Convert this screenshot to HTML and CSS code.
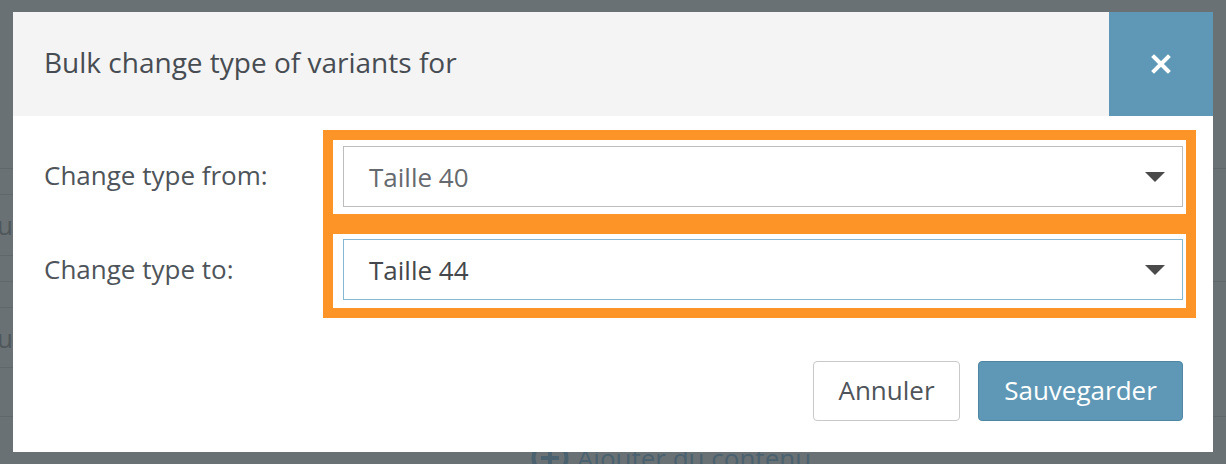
FILE: index.html
```html
<!DOCTYPE html>
<html lang="fr">
<head>
<meta charset="utf-8">
<title>Bulk change type of variants</title>
<link rel="stylesheet" href="styles.css">
</head>
<body>
  <div class="page">
    <div class="bg-top"></div>
    <div class="bg-row full h26"></div>
    <div class="bg-row part h61"><div class="bg-cell"><span>Menu</span></div></div>
    <div class="bg-row part h26"></div>
    <div class="bg-row full h26"></div>
    <div class="bg-row part h60"><div class="bg-cell"><span>Menu</span></div></div>
    <div class="bg-row part h49"></div>
    <div class="bg-row full add-row">
      <div class="add">
        <svg class="add-icon" width="38" height="38" viewBox="0 0 38 38" aria-hidden="true">
          <circle cx="19" cy="19" r="16.5" fill="none" stroke="#4a6170" stroke-width="4"/>
          <path d="M19 10v18M10 19h18" stroke="#4a6170" stroke-width="4"/>
        </svg>
        <span>Ajouter du contenu</span>
      </div>
    </div>
  </div>

  <div class="modal" role="dialog">
    <div class="modal-header">
      <h1 class="modal-title">Bulk change type of variants for</h1>
      <button class="close" aria-label="Fermer">
        <svg width="20" height="20" viewBox="0 0 20 20" aria-hidden="true">
          <path d="M3 3L17 17M17 3L3 17" stroke="#fff" stroke-width="4" stroke-linecap="square"/>
        </svg>
      </button>
    </div>
    <div class="modal-body">
      <div class="form-row">
        <label class="label">Change type from:</label>
        <div class="highlight">
          <div class="select">
            <span class="value muted">Taille 40</span>
            <svg class="caret" width="20" height="10" viewBox="0 0 20 10" aria-hidden="true"><path d="M0 0H20L10 10Z" fill="#4a4a4a"/></svg>
          </div>
        </div>
      </div>
      <div class="form-row">
        <label class="label">Change type to:</label>
        <div class="highlight second">
          <div class="select focus">
            <span class="value">Taille 44</span>
            <svg class="caret" width="20" height="10" viewBox="0 0 20 10" aria-hidden="true"><path d="M0 0H20L10 10Z" fill="#4a4a4a"/></svg>
          </div>
        </div>
      </div>
    </div>
    <div class="modal-footer">
      <button class="btn btn-default">Annuler</button>
      <button class="btn btn-primary">Sauvegarder</button>
    </div>
  </div>
</body>
</html>
```
FILE: styles.css
```css
* { box-sizing: border-box; }
html, body { margin: 0; height: 100%; }
body {
  background: #697174;
  font-family: "Open Sans", "Noto Sans", sans-serif;
  overflow: hidden;
}

/* background page (behind backdrop) */
.page { width: 1226px; }
.bg-top { height: 168px; }
.bg-row { border-top: 1px solid #5f676a; position: relative; }
.bg-row.part { border-top: none; }
.bg-row.part::before {
  content: ""; display: block; height: 1px; width: 700px; background: #5f676a;
}
.h26 { height: 26px; }
.h61 { height: 61px; }
.h60 { height: 60px; }
.h49 { height: 49px; }
.bg-cell {
  width: 13px; height: 59px; display: flex; justify-content: flex-end; align-items: center;
  overflow: hidden; white-space: nowrap; color: #4f575b; font-size: 26px;
}
.add-row { padding-top: 22px; }
.add {
  display: flex; align-items: center; justify-content: center; gap: 8px;
  color: #4a6170; font-size: 26px; line-height: 36px; padding-left: 116px;
}
.add-icon { flex: none; }

/* modal */
.modal {
  position: fixed; top: 12px; left: 13px;
  width: 1200px; height: 440px;
  background: #fff;
  display: flex; flex-direction: column;
}
.modal-header {
  height: 104px; background: #f4f4f4;
  display: flex; align-items: stretch;
}
.modal-title {
  flex: 1; margin: 0; padding: 0 0 4px 31px;
  display: flex; align-items: center;
  font-size: 28px; font-weight: 400; color: #474c52;
}
.close {
  width: 104px; border: none; background: #5e98b6; padding: 0;
  display: flex; align-items: center; justify-content: center;
}
.modal-body { padding: 14px 17px 0 31px; }
.form-row { display: flex; align-items: center; height: 94px; }
.label {
  width: 279px; font-size: 26px; color: #4e5459; padding-bottom: 4px;
}
.highlight {
  flex: 1; height: 94px;
  border: 10px solid #fc9428;
  padding: 6px 3px 7px 10px;
  background: #fff;
}
.highlight.second { padding-top: 5px; }
.select {
  height: 61px; border: 1px solid #bdbdbd; background: #fff;
  display: flex; align-items: center; justify-content: space-between;
  padding: 0 17px 0 25px;
}
.select.focus { border-color: #86b8d2; }
.value { font-size: 26px; color: #44484c; }
.value.muted { color: #666a6e; }
.caret { flex: none; }

.modal-footer {
  margin-top: auto; padding: 0 30px 31px 0;
  display: flex; justify-content: flex-end; gap: 18px;
}
.btn {
  height: 60px; border-radius: 4px; font-family: inherit;
  font-size: 26px; padding: 0 20px 3px;
}
.btn-default { background: #fff; border: 1px solid #c9c9c9; color: #4e5459; width: 147px; }
.btn-primary { background: #5e98b6; border: 1px solid #4f86a3; color: #fff; width: 205px; }
```
